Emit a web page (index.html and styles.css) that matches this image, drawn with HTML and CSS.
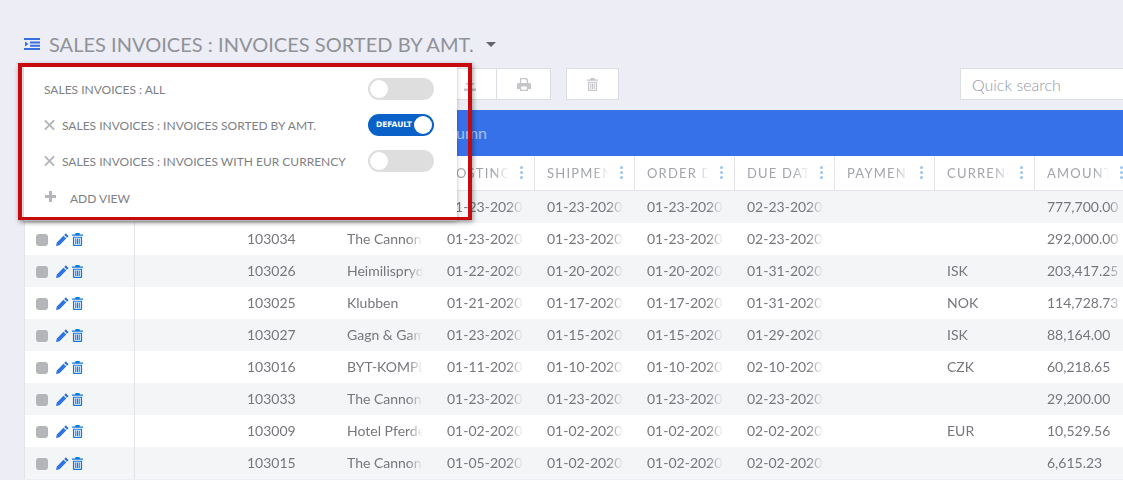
FILE: index.html
```html
<!doctype html>
<html lang="en">
<head>
    <meta charset="UTF-8">
    <title>Sales invoices</title>
    <link rel="stylesheet" href="styles.css">
</head>
<body>
<svg class="defs" width="0" height="0">
    <symbol id="i-pencil" viewBox="0 0 14 14">
        <path d="M10.6.4l3 3-1.800 1.800-3-3zM8 2.900l3 3-7.200 7.200L0 14l.9-3.900z" fill="currentColor"/>
    </symbol>
    <symbol id="i-trash" viewBox="0 0 12 14">
        <path d="M4 0h4l.7 1.500H12v1.400H0V1.500h3.300zM1 4h10v8.600c0 .8-.6 1.400-1.400 1.400H2.400C1.600 14 1 13.400 1 12.600zM2.400 5.200v7.600h7.200V5.200zM3.500 6h1.200v6H3.500zM5.400 6h1.200v6H5.400zM7.300 6h1.200v6H7.300z" fill="currentColor" fill-rule="evenodd"/>
    </symbol>
</svg>

<div class="head">
    <svg class="head-icon" width="16" height="12" viewBox="0 0 16 12">
        <path d="M0 0h16v2H0zM6 3.400h10v2H6zM6 6.700h10v2H6zM0 10h16v2H0zM1 3.500l3.500 2.500L1 8.500z" fill="#3a6fe0"/>
    </svg>
    <span class="head-title">SALES INVOICES : INVOICES SORTED BY AMT.</span>
    <span class="caret"></span>
</div>

<div class="toolbar">
    <div class="btn-group">
        <a class="btn" href="javascript:;">
            <svg width="14" height="14" viewBox="0 0 14 14"><path d="M5 1h4v5h3L7 10.500 2 6h3zM1 11.500h12V14H1z" fill="#c4c6ca"/></svg>
        </a>
        <a class="btn" href="javascript:;">
            <svg width="14" height="13" viewBox="0 0 14 13"><path d="M3 0h6.500L11 1.500V5h1.500c.8 0 1.500.7 1.500 1.500V11h-3v2H3v-2H0V6.500C0 5.700.7 5 1.500 5H3zM4.200 1.200V5h5.600V2.200H8.800v-1zM4.200 8.500v3.300h5.600V8.500z" fill="#c4c6ca" fill-rule="evenodd"/></svg>
        </a>
    </div>
    <a class="btn btn-del" href="javascript:;">
        <svg class="trash-grey" width="11" height="13"><use href="#i-trash"/></svg>
    </a>
    <input class="search" type="text" placeholder="Quick search">
</div>

<div class="bar">Add column</div>

<div class="table">
    <div class="row row-head">
        <div class="cell"></div>
        <div class="cell"></div>
        <div class="cell"></div>
        <div class="cell"></div>
        <div class="cell"><span>POSTING</span><i class="dots"></i></div>
        <div class="cell"><span>SHIPMENT</span><i class="dots"></i></div>
        <div class="cell"><span>ORDER DATE</span><i class="dots"></i></div>
        <div class="cell"><span>DUE DATE</span><i class="dots"></i></div>
        <div class="cell"><span>PAYMENT</span><i class="dots"></i></div>
        <div class="cell"><span>CURRENCY</span><i class="dots"></i></div>
        <div class="cell"><span>AMOUNT</span><i class="dots"></i></div>
    </div>

    <div class="row">
        <div class="cell acts"></div>
        <div class="cell"></div>
        <div class="cell"></div>
        <div class="cell"></div>
        <div class="cell"><span>01-23-2020</span></div>
        <div class="cell"><span>01-23-2020</span></div>
        <div class="cell"><span>01-23-2020</span></div>
        <div class="cell"><span>02-23-2020</span></div>
        <div class="cell"></div>
        <div class="cell"></div>
        <div class="cell"><span>777,700.00</span></div>
    </div>
    <div class="row">
        <div class="cell acts"><b class="check"></b><svg class="pencil"><use href="#i-pencil"/></svg><svg class="trash"><use href="#i-trash"/></svg></div>
        <div class="cell"></div>
        <div class="cell"><span>103034</span></div>
        <div class="cell"><span>The Cannon Group</span></div>
        <div class="cell"><span>01-23-2020</span></div>
        <div class="cell"><span>01-23-2020</span></div>
        <div class="cell"><span>01-23-2020</span></div>
        <div class="cell"><span>02-23-2020</span></div>
        <div class="cell"></div>
        <div class="cell"></div>
        <div class="cell"><span>292,000.00</span></div>
    </div>
    <div class="row">
        <div class="cell acts"><b class="check"></b><svg class="pencil"><use href="#i-pencil"/></svg><svg class="trash"><use href="#i-trash"/></svg></div>
        <div class="cell"></div>
        <div class="cell"><span>103026</span></div>
        <div class="cell"><span>Heimilisprydi</span></div>
        <div class="cell"><span>01-22-2020</span></div>
        <div class="cell"><span>01-20-2020</span></div>
        <div class="cell"><span>01-20-2020</span></div>
        <div class="cell"><span>01-31-2020</span></div>
        <div class="cell"></div>
        <div class="cell"><span>ISK</span></div>
        <div class="cell"><span>203,417.25</span></div>
    </div>
    <div class="row">
        <div class="cell acts"><b class="check"></b><svg class="pencil"><use href="#i-pencil"/></svg><svg class="trash"><use href="#i-trash"/></svg></div>
        <div class="cell"></div>
        <div class="cell"><span>103025</span></div>
        <div class="cell"><span>Klubben</span></div>
        <div class="cell"><span>01-21-2020</span></div>
        <div class="cell"><span>01-17-2020</span></div>
        <div class="cell"><span>01-17-2020</span></div>
        <div class="cell"><span>01-31-2020</span></div>
        <div class="cell"></div>
        <div class="cell"><span>NOK</span></div>
        <div class="cell"><span>114,728.73</span></div>
    </div>
    <div class="row">
        <div class="cell acts"><b class="check"></b><svg class="pencil"><use href="#i-pencil"/></svg><svg class="trash"><use href="#i-trash"/></svg></div>
        <div class="cell"></div>
        <div class="cell"><span>103027</span></div>
        <div class="cell"><span>Gagn &amp; Gaman</span></div>
        <div class="cell"><span>01-23-2020</span></div>
        <div class="cell"><span>01-15-2020</span></div>
        <div class="cell"><span>01-15-2020</span></div>
        <div class="cell"><span>01-29-2020</span></div>
        <div class="cell"></div>
        <div class="cell"><span>ISK</span></div>
        <div class="cell"><span>88,164.00</span></div>
    </div>
    <div class="row">
        <div class="cell acts"><b class="check"></b><svg class="pencil"><use href="#i-pencil"/></svg><svg class="trash"><use href="#i-trash"/></svg></div>
        <div class="cell"></div>
        <div class="cell"><span>103016</span></div>
        <div class="cell"><span>BYT-KOMPLEKT</span></div>
        <div class="cell"><span>01-11-2020</span></div>
        <div class="cell"><span>01-10-2020</span></div>
        <div class="cell"><span>01-10-2020</span></div>
        <div class="cell"><span>02-10-2020</span></div>
        <div class="cell"></div>
        <div class="cell"><span>CZK</span></div>
        <div class="cell"><span>60,218.65</span></div>
    </div>
    <div class="row">
        <div class="cell acts"><b class="check"></b><svg class="pencil"><use href="#i-pencil"/></svg><svg class="trash"><use href="#i-trash"/></svg></div>
        <div class="cell"></div>
        <div class="cell"><span>103033</span></div>
        <div class="cell"><span>The Cannon Group</span></div>
        <div class="cell"><span>01-23-2020</span></div>
        <div class="cell"><span>01-23-2020</span></div>
        <div class="cell"><span>01-23-2020</span></div>
        <div class="cell"><span>02-23-2020</span></div>
        <div class="cell"></div>
        <div class="cell"></div>
        <div class="cell"><span>29,200.00</span></div>
    </div>
    <div class="row">
        <div class="cell acts"><b class="check"></b><svg class="pencil"><use href="#i-pencil"/></svg><svg class="trash"><use href="#i-trash"/></svg></div>
        <div class="cell"></div>
        <div class="cell"><span>103009</span></div>
        <div class="cell"><span>Hotel Pferdestall</span></div>
        <div class="cell"><span>01-02-2020</span></div>
        <div class="cell"><span>01-02-2020</span></div>
        <div class="cell"><span>01-02-2020</span></div>
        <div class="cell"><span>02-02-2020</span></div>
        <div class="cell"></div>
        <div class="cell"><span>EUR</span></div>
        <div class="cell"><span>10,529.56</span></div>
    </div>
    <div class="row">
        <div class="cell acts"><b class="check"></b><svg class="pencil"><use href="#i-pencil"/></svg><svg class="trash"><use href="#i-trash"/></svg></div>
        <div class="cell"></div>
        <div class="cell"><span>103015</span></div>
        <div class="cell"><span>The Cannon Group</span></div>
        <div class="cell"><span>01-05-2020</span></div>
        <div class="cell"><span>01-02-2020</span></div>
        <div class="cell"><span>01-02-2020</span></div>
        <div class="cell"><span>02-02-2020</span></div>
        <div class="cell"></div>
        <div class="cell"></div>
        <div class="cell"><span>6,615.23</span></div>
    </div>
</div>

<div class="popup">
    <div class="view">
        <span class="view-name">SALES INVOICES : ALL</span>
        <span class="toggle"></span>
    </div>
    <div class="view">
        <span class="x"></span>
        <span class="view-name">SALES INVOICES : INVOICES SORTED BY AMT.</span>
        <span class="toggle on">DEFAULT</span>
    </div>
    <div class="view">
        <span class="x"></span>
        <span class="view-name">SALES INVOICES : INVOICES WITH EUR CURRENCY</span>
        <span class="toggle"></span>
    </div>
    <div class="view view-add">
        <span class="plus"></span>
        <span class="view-name">ADD VIEW</span>
    </div>
</div>
<div class="redbox"></div>
</body>
</html>
```

FILE: styles.css
```css
*{
    margin: 0;
    padding: 0;
    box-sizing: border-box;
}

html,body{
    height: 100%;
    overflow: hidden;
}

body{
    width: 1123px;
    background-color: #ECEDF5;
    font-family: Lato, "Liberation Sans", sans-serif;
    color: #75777c;
    padding-left: 24px;
    position: relative;
}

.defs{
    position: absolute;
}

/* title */
.head{
    height: 68px;
    display: flex;
    align-items: center;
    padding-top: 20px;
}
.head-icon{
    margin-right: 9px;
}
.head-title{
    font-size: 20px;
    color: #909298;
    letter-spacing: .03px;
}
.caret{
    margin-left: 12px;
    border: 5px solid transparent;
    border-top-color: #63656b;
    border-bottom-width: 0;
}

/* toolbar */
.toolbar{
    height: 42px;
    display: flex;
    align-items: flex-start;
    padding-left: 419px;
}
.btn-group{
    display: flex;
    flex: none;
}
.btn{
    display: flex;
    flex: none;
    align-items: center;
    justify-content: center;
    width: 54px;
    height: 32px;
    background-color: #fff;
    border: 1px solid #dcdde2;
}
.btn-group .btn + .btn{
    border-left: 0;
}
.btn-del{
    width: 53px;
    margin-left: 15px;
}
.trash-grey{
    color: #c4c6ca;
}
.search{
    width: 200px;
    height: 32px;
    margin-left: 341px;
    padding: 0 11px;
    flex: none;
    font-family: inherit;
    font-size: 16px;
    border: 1px solid #dcdde2;
    background-color: #fff;
    outline: 0;
}
.search::placeholder{
    color: #96989e;
    font-weight: 300;
}

/* blue bar */
.bar{
    width: 1110px;
    height: 46px;
    background-color: #3771EA;
    color: #A5C0F6;
    font-size: 16px;
    line-height: 46px;
    padding-left: 379px;
}

/* table */
.table{
    width: 1110px;
}
.row{
    display: grid;
    grid-template-columns: 110px 100px repeat(9, 100px);
    height: 32px;
    background-color: #fff;
}
.row:nth-child(even){
    background-color: #F4F5F7;
}
.row-head{
    height: 35px;
    background-color: #fff;
    border-bottom: 1px solid #E3E4E9;
}
.cell{
    display: flex;
    align-items: center;
    padding-left: 13px;
    font-size: 14px;
    line-height: 32px;
    overflow: hidden;
    white-space: nowrap;
}
.cell span{
    display: block;
    width: 76px;
    overflow: hidden;
    -webkit-mask-image: linear-gradient(to right, #000 80%, transparent 100%);
    mask-image: linear-gradient(to right, #000 80%, transparent 100%);
}
.row-head .cell{
    border-left: 1px solid #E3E4E9;
    padding-left: 12px;
    font-size: 13px;
    letter-spacing: 1.200px;
    color: #a2a4aa;
    position: relative;
}
.row-head .cell span{
    width: 62px;
    -webkit-mask-image: linear-gradient(to right, #000 75%, transparent 100%);
    mask-image: linear-gradient(to right, #000 75%, transparent 100%);
}
.dots{
    position: absolute;
    left: 85px;
    top: 10px;
    width: 3px;
    height: 3px;
    border-radius: 50%;
    background-color: #9CC5EE;
    box-shadow: 0 5px 0 #9CC5EE, 0 10px 0 #9CC5EE;
}
.acts{
    padding-left: 11px;
    padding-top: 1px;
    border-left: 1px solid #E3E4E9;
}
.acts + .cell{
    border-left: 1px solid #E3E4E9;
}
.check{
    width: 12px;
    height: 12px;
    border-radius: 3px;
    background-color: #B4B5B8;
    margin-right: 8px;
}
.pencil{
    width: 13px;
    height: 13px;
    margin-right: 3px;
    color: #2F74E0;
}
.trash{
    width: 11px;
    height: 13px;
    color: #1279DE;
}

/* views menu */
.popup{
    position: absolute;
    left: 24px;
    top: 67px;
    width: 433px;
    height: 154px;
    padding: 4px 23px 0 20px;
    background-color: #fff;
    box-shadow: 0 1px 4px rgba(0, 0, 0, .25);
}
.view{
    height: 36px;
    display: flex;
    align-items: center;
    font-size: 12px;
    color: #7d7f85;
}
.view-name{
    flex: 1;
}
.x{
    position: relative;
    width: 11px;
    height: 11px;
    margin-right: 7px;
}
.x::before,
.x::after{
    content: "";
    position: absolute;
    left: -1px;
    top: 4.500px;
    width: 13px;
    height: 2px;
    background-color: #b5b6ba;
    transform: rotate(45deg);
}
.x::after{
    transform: rotate(-45deg);
}
.toggle{
    width: 66px;
    height: 22px;
    border-radius: 11px;
    background-color: #DEDEDE;
    position: relative;
    font-size: 7.500px;
    font-weight: 900;
    font-family: "DejaVu Sans", sans-serif;
    line-height: 22px;
    padding-left: 8px;
    color: #fff;
}
.toggle::after{
    content: "";
    position: absolute;
    left: 2px;
    top: 2px;
    width: 18px;
    height: 18px;
    border-radius: 50%;
    background-color: #fff;
}
.toggle.on{
    background-color: #0A62C9;
}
.toggle.on::after{
    left: 46px;
}
.view-add{
    padding-top: 2px;
}
.plus{
    position: relative;
    width: 11px;
    height: 11px;
    margin: -4px 14px 0 1px;
    background:
        linear-gradient(#b5b6ba, #b5b6ba) center / 100% 3px no-repeat,
        linear-gradient(#b5b6ba, #b5b6ba) center / 3px 100% no-repeat;
}

/* red annotation */
.redbox{
    position: absolute;
    left: 18px;
    top: 63px;
    width: 454px;
    height: 157px;
    border: 4px solid #C70A0E;
    border-bottom-width: 3px;
    box-shadow: 1px 2px 5px rgba(0, 0, 0, .4);
}
```
